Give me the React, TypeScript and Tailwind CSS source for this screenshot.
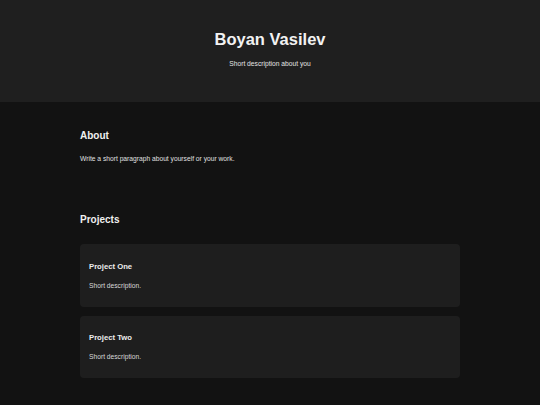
import React from "react";

const projects = [
  { title: "Project One", desc: "Short description." },
  { title: "Project Two", desc: "Short description." },
];

export default function App() {
  return (
    <div className="min-h-screen bg-[#121212] font-['Liberation_Sans',Arial,sans-serif] text-[#e0e0e0]">
      <header className="h-[102px] bg-[#1f1f1f] flex flex-col items-center pt-[29px]">
        <h1 className="text-[16.5px] leading-[20px] font-bold text-[#f2f2f2]">Boyan Vasilev</h1>
        <p className="mt-[11px] text-[6.7px] leading-[8px] text-[#e4e4e4]">Short description about you</p>
      </header>
      <main className="w-[380px] mx-auto pt-[28px] pb-[27px]">
        <section className="flex flex-col">
          <h2 className="text-[10px] leading-[12px] font-bold text-[#f0f0f0]">About</h2>
          <p className="mt-[13px] text-[6.7px] leading-[8px] text-[#e0e0e0]">
            Write a short paragraph about yourself or your work.
          </p>
        </section>
        <section className="mt-[51px] flex flex-col">
          <h2 className="text-[10px] leading-[12px] font-bold text-[#f0f0f0]">Projects</h2>
          <div className="mt-[18px] flex flex-col gap-[9px]">
            {projects.map((p) => (
              <div key={p.title} className="bg-[#1e1e1e] rounded-[4px] px-[9px] pt-[17.5px] pb-[17px] flex flex-col">
                <h3 className="text-[7.7px] leading-[9px] font-bold text-[#ececec]">{p.title}</h3>
                <p className="mt-[11px] text-[6.7px] leading-[8px] text-[#d8d8d8]">{p.desc}</p>
              </div>
            ))}
          </div>
        </section>
      </main>
    </div>
  );
}
